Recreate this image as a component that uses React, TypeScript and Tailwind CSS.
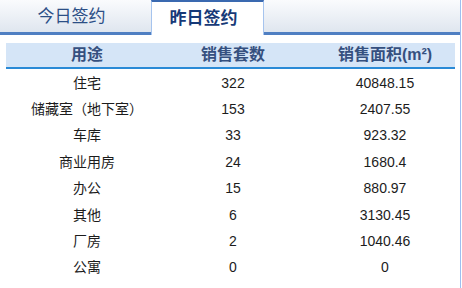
import React from 'react';

const rows = [
  { use: '住宅', count: '322', area: '40848.15' },
  { use: '储藏室（地下室）', count: '153', area: '2407.55' },
  { use: '车库', count: '33', area: '923.32' },
  { use: '商业用房', count: '24', area: '1680.4' },
  { use: '办公', count: '15', area: '880.97' },
  { use: '其他', count: '6', area: '3130.45' },
  { use: '厂房', count: '2', area: '1040.46' },
  { use: '公寓', count: '0', area: '0' },
];

export default function App() {
  return (
    <div className="w-[462px] h-[288px] overflow-hidden bg-white font-['Liberation_Sans','Noto_Sans_CJK_SC',sans-serif]">
      <div className="w-[461px] h-full border-r border-[#9dbff0]">
        {/* Tabs */}
        <div className="flex h-[35px]">
          <div className="w-[151px] flex items-center justify-center pr-[8px] pt-[2px] bg-gradient-to-b from-[#fafbfd] to-[#dfe6ef] border-b-[3px] border-[#4f7fc2] text-[17px] text-[#2c4f86]">
            今日签约
          </div>
          <div className="w-[113px] flex items-center justify-center pr-[8px] bg-white border-t-2 border-t-[#3a69b0] border-x border-x-[#a6c4ee] text-[17px] font-bold text-[#173a78]">
            昨日签约
          </div>
          <div className="flex-1 bg-gradient-to-b from-[#fafbfd] to-[#dfe6ef] border-b-[3px] border-[#4f7fc2]" />
        </div>

        {/* Table */}
        <div className="mt-[8px] ml-[6px] w-[449px]">
          <div className="grid grid-cols-[162px_130px_157px] h-[26px] items-center bg-[#d5e5f7] border-b-2 border-[#2a8ad6] text-[16px] font-bold text-[#35507f]">
            <div className="text-center">用途</div>
            <div className="text-center">销售套数</div>
            <div className="text-center pl-[17px]">销售面积(m²)</div>
          </div>
          <div className="pt-[1px]">
            {rows.map((r) => (
              <div key={r.use} className="grid grid-cols-[162px_130px_157px] h-[26.4px] items-center text-[14px] text-[#1c1c1c]">
                <div className="text-center">{r.use}</div>
                <div className="text-center">{r.count}</div>
                <div className="text-center pl-[17px]">{r.area}</div>
              </div>
            ))}
          </div>
        </div>
      </div>
    </div>
  );
}
